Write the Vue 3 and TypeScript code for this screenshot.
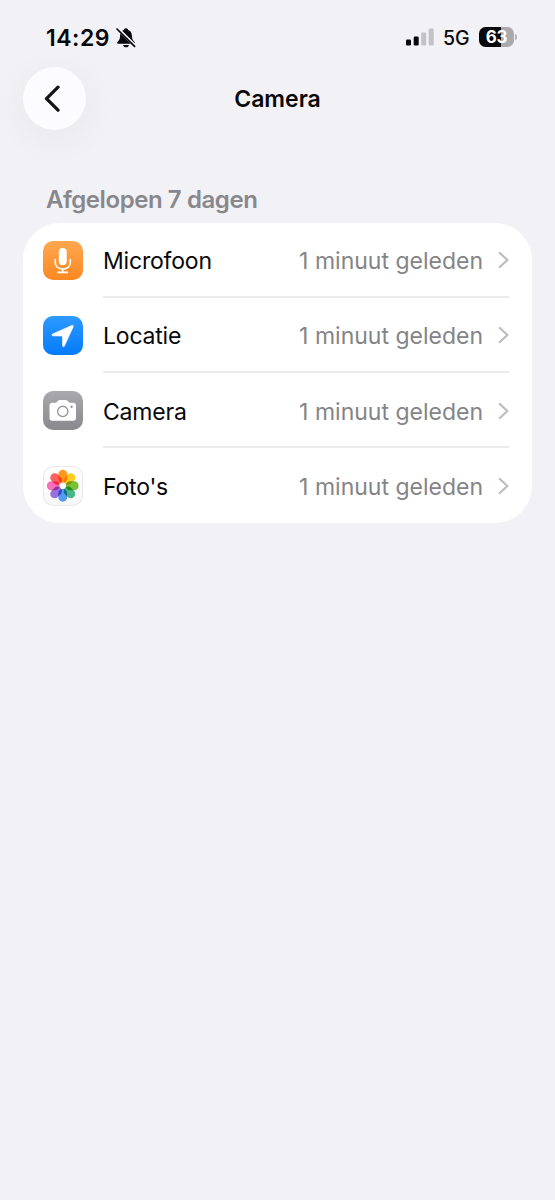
<script setup lang="ts">
type IconName = 'mic' | 'location' | 'camera' | 'photos'

interface Entry {
  icon: IconName
  label: string
  time: string
}

const entries: Entry[] = [
  { icon: 'mic', label: 'Microfoon', time: '1 minuut geleden' },
  { icon: 'location', label: 'Locatie', time: '1 minuut geleden' },
  { icon: 'camera', label: 'Camera', time: '1 minuut geleden' },
  { icon: 'photos', label: "Foto's", time: '1 minuut geleden' },
]

const petals: string[] = [
  '#ff8a00',
  '#ffc400',
  '#67b91c',
  '#2cae7c',
  '#3a8df0',
  '#8a5bd6',
  '#f45bb0',
  '#ff4a4e',
]
</script>

<template>
  <div class="screen">
    <div class="status">
      <span class="clock">14:29</span>
      <svg class="bell" width="20" height="21" viewBox="0 0 20 21">
        <path
          d="M10 1.2c1.2 0 2 .8 2.1 1.8 2.5.8 3.7 2.900 3.800 5.500.1 3.200.6 4.400 2 5.700.7.7.9 1.100.9 1.500 0 .7-.5 1-1.200 1H2.400c-.7 0-1.200-.3-1.200-1 0-.4.2-.8.9-1.500 1.400-1.300 1.900-2.500 2-5.700.1-2.600 1.300-4.700 3.800-5.500.1-1 .9-1.800 2.100-1.800z"
          fill="#08080a"
        />
        <path d="M7.100 17.900h5.800c-.3 1.400-1.400 2.300-2.900 2.300s-2.600-.9-2.900-2.300z" fill="#08080a" />
        <path d="M1.800 1.600 19 18.800" stroke="#f2f1f6" stroke-width="3.200" />
        <path d="M1 2 18.600 19.400" stroke="#08080a" stroke-width="1.700" stroke-linecap="round" />
      </svg>
      <span class="spacer"></span>
      <svg class="signal" width="28" height="18" viewBox="0 0 28 18">
        <rect x="0" y="11.500" width="5" height="6" rx="1.300" fill="#08080a" />
        <rect x="7.700" y="8.500" width="5" height="9" rx="1.300" fill="#08080a" />
        <rect x="15.200" y="4.500" width="5" height="13" rx="1.300" fill="#c2c2c6" />
        <rect x="22.700" y="0.500" width="5" height="17" rx="1.300" fill="#c2c2c6" />
      </svg>
      <span class="network">5G</span>
      <span class="battery"><span class="level">63</span></span>
      <span class="nub"></span>
    </div>

    <header class="nav">
      <button class="back" type="button" aria-label="Terug">
        <svg width="18" height="28" viewBox="0 0 18 28">
          <path
            d="M15 2.200 3.500 13.700l11.500 11.500"
            fill="none"
            stroke="#141416"
            stroke-width="3.300"
            stroke-linecap="round"
            stroke-linejoin="round"
          />
        </svg>
      </button>
      <h1 class="title">Camera</h1>
    </header>

    <h2 class="section">Afgelopen 7 dagen</h2>

    <ul class="card">
      <li v-for="entry in entries" :key="entry.icon" class="row">
        <span class="tile" :class="entry.icon">
          <svg v-if="entry.icon === 'mic'" width="40" height="40" viewBox="0 0 40 40">
            <rect x="16" y="7" width="8" height="17.500" rx="4" fill="#fff" />
            <path
              d="M12.400 18.800v2.700c0 4.300 3 6.900 7.600 6.900s7.600-2.600 7.600-6.900v-2.700M20 28.600v3.200M15.300 31.800h9.400"
              fill="none"
              stroke="#fff"
              stroke-width="1.700"
              stroke-linecap="round"
            />
          </svg>
          <svg v-else-if="entry.icon === 'location'" width="40" height="40" viewBox="0 0 40 40">
            <path
              d="M29.300 9.500 9.500 18.300c-.9.500-.7 1.800.4 1.800l9.200.2c.4 0 .6.200.6.600l.1 9.200c0 1.200 1.400 1.400 1.900.4l8.900-19.500c.4-1-.3-1.900-1.300-1.500z"
              fill="#fff"
              stroke="#fff"
              stroke-width=".6"
              stroke-linejoin="round"
            />
          </svg>
          <svg v-else-if="entry.icon === 'camera'" width="40" height="40" viewBox="0 0 40 40">
            <path
              d="M9.300 12h3.200c.8 0 1.200-.2 1.600-.8l.9-1.200c.5-.7 1.100-1 1.900-1h6.200c.8 0 1.400.3 1.900 1l.9 1.200c.4.6.8.8 1.600.8h3.200c1.700 0 2.700 1 2.700 2.700v12.600c0 1.800-1 2.700-2.700 2.700H9.300c-1.700 0-2.700-.9-2.700-2.700V14.700c0-1.700 1-2.700 2.700-2.700z"
              fill="#fff"
            />
            <circle cx="20" cy="20.700" r="5.200" fill="none" stroke="#97979c" stroke-width="1.400" />
            <circle cx="28.900" cy="16" r="1.200" fill="#97979c" />
          </svg>
          <svg v-else class="flower" width="40" height="40" viewBox="0 0 40 40">
            <rect
              v-for="(color, i) in petals"
              :key="color"
              class="petal"
              x="15.500"
              y="3.900"
              width="9"
              height="13"
              rx="4.500"
              :fill="color"
              :transform="`rotate(${i * 45} 20 20)`"
            />
            <circle cx="20" cy="20" r="2.800" fill="#fff" />
          </svg>
        </span>
        <span class="body">
          <span class="label">{{ entry.label }}</span>
          <span class="time">{{ entry.time }}</span>
          <svg class="chevron" width="11" height="18" viewBox="0 0 11 18">
            <path
              d="M1.800 2 9.400 9l-7.600 7"
              fill="none"
              stroke="#bdbdc0"
              stroke-width="2.300"
              stroke-linecap="round"
              stroke-linejoin="round"
            />
          </svg>
        </span>
      </li>
    </ul>
  </div>
</template>

<style>
body {
  background: #f2f1f6;
}
</style>

<style scoped>
.screen {
  box-sizing: border-box;
  width: 555px;
  height: 1200px;
  overflow: hidden;
  background: #f2f1f6;
  color: #08080a;
  font-family: Inter, "Liberation Sans", sans-serif;
}

.status {
  display: flex;
  align-items: center;
  height: 67px;
  padding: 7px 38px 0 46px;
  box-sizing: border-box;
}

.clock {
  width: 70px;
  font-size: 23px;
  font-weight: 600;
  letter-spacing: 0.5px;
  line-height: 28px;
  padding-top: 1px;
  white-space: nowrap;
}

.spacer {
  flex: 1;
}

.signal {
  margin-right: 9px;
}

.network {
  width: 36px;
  padding-top: 1px;
  font-size: 19.500px;
  font-weight: 500;
}

.battery {
  width: 35px;
  height: 20px;
  border-radius: 6.500px;
  background: linear-gradient(90deg, #08080a 63%, #aaaaad 63%);
  display: flex;
  align-items: center;
  justify-content: center;
}

.level {
  color: #fff;
  font-size: 17px;
  font-weight: 700;
  line-height: 20px;
  letter-spacing: -0.3px;
}

.nub {
  width: 2px;
  height: 6px;
  margin-left: 1px;
  border-radius: 0 2px 2px 0;
  background: #b5b5b9;
}

.nav {
  display: grid;
  grid-template-columns: 63px 1fr 63px;
  align-items: center;
  height: 63px;
  padding: 0 23px;
}

.back {
  display: flex;
  align-items: center;
  justify-content: center;
  width: 63px;
  height: 63px;
  padding: 0 5px 0 0;
  border: 0;
  border-radius: 50%;
  background: #fcfbff;
  box-shadow: 0 8px 40px rgba(0, 0, 0, 0.05);
}

.title {
  margin: 0;
  text-align: center;
  font-size: 23px;
  font-weight: 600;
  line-height: 30px;
}

.section {
  margin: 55px 0 0 46px;
  font-size: 24px;
  font-weight: 600;
  line-height: 30px;
  letter-spacing: -0.42px;
  color: #88888c;
}

.card {
  box-sizing: border-box;
  width: 509px;
  height: 300px;
  margin: 8px 0 0 23px;
  padding: 0;
  list-style: none;
  border-radius: 37px;
  background: #fff;
}

.row {
  display: flex;
  align-items: center;
  height: 75.400px;
  padding: 0 23px 0 20px;
}

.row:first-child {
  height: 74.600px;
}

.tile {
  flex: none;
  width: 39.500px;
  height: 39.500px;
  margin-right: 20.500px;
  border-radius: 10px;
  overflow: hidden;
}

.tile svg {
  display: block;
  width: 100%;
  height: 100%;
}

.mic {
  background: linear-gradient(#ffa751, #fd8820);
}

.location {
  background: linear-gradient(#2d9aff, #047bfa);
}

.camera {
  background: linear-gradient(#aaaaae, #88888d);
}

.photos {
  background: linear-gradient(#fff, #f7f7f8);
  box-shadow: inset 0 0 0 1px #e9e9eb;
}

.flower {
  isolation: isolate;
}

.petal {
  mix-blend-mode: multiply;
  opacity: 0.88;
}

.body {
  flex: 1;
  display: flex;
  align-items: center;
  height: 100%;
  box-sizing: border-box;
  padding-top: 2px;
  border-bottom: 2px solid #ebebec;
}

.row:last-child .body {
  border-bottom-color: transparent;
}

.label,
.time {
  padding-top: 2px;
  font-size: 23px;
  line-height: 30px;
}

.label {
  flex: 1;
  letter-spacing: -0.2px;
}

.time {
  margin-right: 15px;
  color: #848487;
  white-space: nowrap;
}
</style>
